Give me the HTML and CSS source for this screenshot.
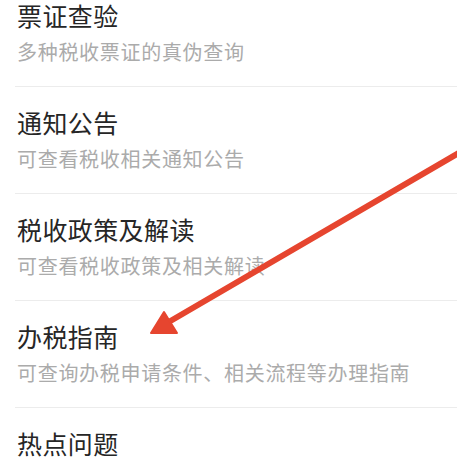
FILE: index.html
```html
<!DOCTYPE html>
<html lang="zh-CN">
<head>
<meta charset="utf-8">
<title>税务服务</title>
<link rel="stylesheet" href="styles.css">
</head>
<body>
<div class="page">
  <ul class="list">
    <li class="item">
      <div class="title">票证查验</div>
      <div class="desc">多种税收票证的真伪查询</div>
    </li>
    <li class="item">
      <div class="title">通知公告</div>
      <div class="desc">可查看税收相关通知公告</div>
    </li>
    <li class="item">
      <div class="title">税收政策及解读</div>
      <div class="desc">可查看税收政策及相关解读</div>
    </li>
    <li class="item">
      <div class="title">办税指南</div>
      <div class="desc">可查询办税申请条件、相关流程等办理指南</div>
    </li>
    <li class="item">
      <div class="title">热点问题</div>
    </li>
  </ul>
  <svg class="arrow" width="457" height="462" viewBox="0 0 457 462" aria-hidden="true">
    <line x1="462" y1="151" x2="167" y2="323" stroke="#e6452f" stroke-width="6" stroke-linecap="round"/>
    <polygon points="151,333 164,312 177,333" fill="#e6452f" stroke="#e6452f" stroke-width="2" stroke-linejoin="round"/>
  </svg>
</div>
</body>
</html>
```

FILE: styles.css
```css
html, body {
  margin: 0;
  padding: 0;
  background: #ffffff;
}

body {
  width: 457px;
  height: 462px;
  overflow: hidden;
  font-family: "Noto Sans CJK SC", "Noto Sans", sans-serif;
}

.page {
  position: relative;
  width: 457px;
  height: 462px;
  overflow: hidden;
}

.list {
  list-style: none;
  margin: -20px 0 0 0;
  padding: 0 0 0 15px;
}

.item {
  display: flex;
  flex-direction: column;
  gap: 9px;
  padding: 20px 0 21px 2px;
  border-bottom: 1px solid #ececec;
}

.title {
  font-size: 25px;
  line-height: 30px;
  letter-spacing: 0.4px;
  color: #262626;
}

.desc {
  font-size: 20px;
  line-height: 26px;
  letter-spacing: 0.7px;
  color: #ababab;
}

.arrow {
  position: absolute;
  left: 0;
  top: 0;
  pointer-events: none;
}
```
